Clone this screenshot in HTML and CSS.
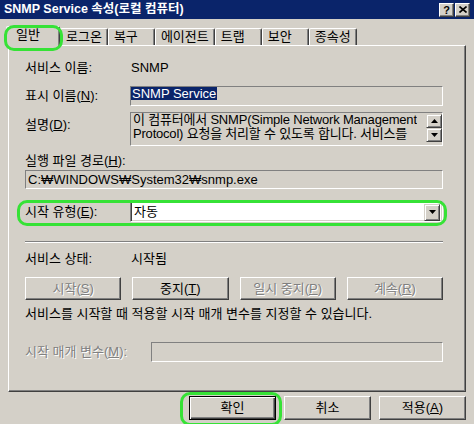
FILE: index.html
```html
<!DOCTYPE html>
<html lang="ko">
<head>
  <meta charset="UTF-8">
  <title>SNMP Service 속성(로컬 컴퓨터)</title>
  <link rel="stylesheet" href="styles.css">
</head>
<body>
  <div class="dialog">
    <!-- 제목 표시줄 -->
    <div class="titlebar">
      <span class="title">SNMP Service 속성(로컬 컴퓨터)</span>
      <div class="caption-btns">
        <span class="cap-btn help">?</span>
        <span class="cap-btn">
          <svg width="8" height="7" viewBox="0 0 8 7"><path d="M0.5 0.5 L7.5 6.5 M7.5 0.5 L0.5 6.5" stroke="#000" stroke-width="1.6"/></svg>
        </span>
      </div>
    </div>

    <!-- 탭 -->
    <div class="tabs">
      <span class="tab active marked">일반</span>
      <span class="tab">로그온</span>
      <span class="tab">복구</span>
      <span class="tab">에이전트</span>
      <span class="tab">트랩</span>
      <span class="tab">보안</span>
      <span class="tab">종속성</span>
    </div>

    <div class="panel">
      <div class="row row-name">
        <span class="label">서비스 이름:</span>
        <span class="value">SNMP</span>
      </div>

      <div class="row row-display">
        <span class="label">표시 이름(<u>N</u>):</span>
        <div class="field"><span class="selected">SNMP Service</span></div>
      </div>

      <div class="row row-desc">
        <span class="label">설명(<u>D</u>):</span>
        <div class="field desc">
          <div class="desc-text">이 컴퓨터에서 SNMP(Simple Network Management<br>Protocol) 요청을 처리할 수 있도록 합니다. 서비스를</div>
          <div class="scroll">
            <span class="scroll-btn"><svg width="7" height="4" viewBox="0 0 7 4"><polygon points="3.5,0 7,4 0,4" fill="#000"/></svg></span>
            <span class="scroll-btn"><svg width="7" height="4" viewBox="0 0 7 4"><polygon points="0,0 7,0 3.5,4" fill="#000"/></svg></span>
          </div>
        </div>
      </div>

      <div class="caption">실행 파일 경로(<u>H</u>):</div>
      <div class="field path">C:₩WINDOWS₩System32₩snmp.exe</div>

      <div class="row row-type marked">
        <span class="label">시작 유형(<u>E</u>):</span>
        <div class="combo">
          <span class="combo-text">자동</span>
          <span class="combo-btn"><svg width="7" height="4" viewBox="0 0 7 4"><polygon points="0,0 7,0 3.5,4" fill="#000"/></svg></span>
        </div>
      </div>

      <div class="sep"></div>

      <div class="row row-status">
        <span class="label">서비스 상태:</span>
        <span class="value">시작됨</span>
      </div>

      <div class="btn-row">
        <button class="btn disabled">시작(<u>S</u>)</button>
        <button class="btn">중지(<u>T</u>)</button>
        <button class="btn disabled">일시 중지(<u>P</u>)</button>
        <button class="btn disabled">계속(<u>R</u>)</button>
      </div>

      <div class="hint">서비스를 시작할 때 적용할 시작 매개 변수를 지정할 수 있습니다.</div>

      <div class="row row-params">
        <span class="label disabled">시작 매개 변수(<u>M</u>):</span>
        <div class="field"></div>
      </div>
    </div>

    <div class="footer">
      <button class="btn default marked">확인</button>
      <button class="btn">취소</button>
      <button class="btn">적용(<u>A</u>)</button>
    </div>
  </div>
</body>
</html>
```

FILE: styles.css
```css
/* Reset & Base */
* {
  margin: 0;
  padding: 0;
  box-sizing: border-box;
}
body {
  width: 474px;
  height: 424px;
  overflow: hidden;
  background: #d4d0c8;
  color: #000;
  font-family: "Liberation Sans", "Noto Sans CJK KR", sans-serif;
  font-size: 13px;
  line-height: 14px;
}
u {
  text-decoration: underline;
}
.dialog {
  width: 474px;
  height: 424px;
}

/* 제목 표시줄 */
.titlebar {
  height: 19px;
  background: #0a246a;
  display: flex;
  align-items: center;
  justify-content: space-between;
  padding: 0 4px 0 4px;
}
.title {
  color: #fff;
  font-weight: bold;
  font-size: 12.5px;
  line-height: 19px;
}
.caption-btns {
  display: flex;
  gap: 1px;
}
.cap-btn {
  width: 15px;
  height: 14px;
  display: flex;
  align-items: center;
  justify-content: center;
  background: #d4d0c8;
  border: 1px solid;
  border-color: #fff #404040 #404040 #fff;
  box-shadow: inset -1px -1px #808080;
}
.cap-btn.help {
  font-weight: bold;
  font-size: 11px;
  line-height: 12px;
}

/* 탭 */
.tabs {
  display: flex;
  align-items: flex-end;
  height: 19px;
  margin-top: 7px;
  padding-left: 6px;
}
.tab {
  height: 17px;
  min-width: 47px;
  padding: 0 5px;
  line-height: 16px;
  border: 1px solid;
  border-bottom: none;
  border-color: #fff #404040 transparent #fff;
  box-shadow: inset -1px 0 #808080;
  border-radius: 2px 2px 0 0;
}
.tab.active {
  height: 20px;
  min-width: 54px;
  padding-left: 9px;
  margin-bottom: -1px;
  position: relative;
  z-index: 1;
  background: #d4d0c8;
}

/* 초록색 강조 표시 */
.marked {
  position: relative;
}
.marked::after {
  content: "";
  position: absolute;
  border: 3px solid #36e236;
  border-radius: 10px;
  pointer-events: none;
}
.tab.marked::after {
  top: -2px;
  left: -3px;
  right: -4px;
  bottom: -5px;
}
.row-type.marked::after {
  top: -1px;
  left: -8px;
  right: -4px;
  bottom: -4px;
}
.btn.marked::after {
  top: -5px;
  left: -10px;
  right: -7px;
  bottom: -7px;
}

/* 패널 */
.panel {
  margin-left: 8px;
  width: 458px;
  height: 347px;
  border: 1px solid;
  border-color: #fff #404040 #404040 #fff;
  box-shadow: inset -1px -1px #808080;
  padding: 15px 22px 0 16px;
}
.row {
  display: flex;
  align-items: center;
}
.label {
  width: 105px;
  flex: none;
}
.value {
  padding-left: 1px;
}
.disabled {
  color: #808080;
  text-shadow: 1px 1px #fff;
}
.field {
  flex: 1;
  height: 20px;
  border: 1px solid;
  border-color: #808080 #fff #fff #808080;
}
.row-name {
  height: 14px;
}
.row-display {
  margin-top: 11px;
  height: 20px;
}
.selected {
  display: inline-block;
  background: #0a246a;
  color: #fff;
  line-height: 13px;
  padding: 0 1px;
}
.row-desc {
  margin-top: 6px;
  height: 34px;
  align-items: flex-start;
}
.row-desc .label {
  padding-top: 6px;
}
.field.desc {
  height: 34px;
  display: flex;
  justify-content: space-between;
}
.desc-text {
  padding: 0 0 0 2px;
  line-height: 14px;
  letter-spacing: -0.2px;
  white-space: nowrap;
  overflow: hidden;
}
.scroll {
  display: flex;
  flex-direction: column;
  padding-top: 1px;
}
.scroll-btn {
  width: 16px;
  height: 14px;
  display: flex;
  align-items: center;
  justify-content: center;
  background: #d4d0c8;
  border: 1px solid;
  border-color: #d4d0c8 #404040 #404040 #d4d0c8;
  box-shadow: inset 1px 1px #fff, inset -1px -1px #808080;
}
.caption {
  margin-top: 8px;
  line-height: 14px;
}
.field.path {
  margin-top: 2px;
  height: 19px;
  line-height: 17px;
  padding-left: 2px;
}
.row-type {
  margin-top: 12px;
  height: 21px;
}
.combo {
  flex: 1;
  height: 21px;
  display: flex;
  align-items: center;
  justify-content: space-between;
  background: #fff;
  border: 1px solid;
  border-color: #808080 #fff #fff #808080;
  box-shadow: inset 1px 1px #404040, inset -1px -1px #d4d0c8;
  padding: 2px 2px 1px 3px;
}
.combo-btn {
  width: 16px;
  height: 17px;
  display: flex;
  align-items: center;
  justify-content: center;
  background: #d4d0c8;
  border: 1px solid;
  border-color: #d4d0c8 #404040 #404040 #d4d0c8;
  box-shadow: inset 1px 1px #fff, inset -1px -1px #808080;
}
.sep {
  margin-top: 19px;
  height: 2px;
  border-top: 1px solid #808080;
  border-bottom: 1px solid #fff;
}
.row-status {
  margin-top: 9px;
  height: 14px;
}

/* 버튼 */
.btn-row {
  display: flex;
  gap: 11px;
  margin-top: 11px;
}
.btn {
  height: 23px;
  flex: 1;
  font: inherit;
  color: #000;
  background: #d4d0c8;
  border: 1px solid;
  border-color: #fff #404040 #404040 #fff;
  box-shadow: inset -1px -1px #808080;
}
.btn.disabled {
  color: #808080;
  text-shadow: 1px 1px #fff;
}
.hint {
  margin-top: 7px;
  line-height: 14px;
}
.row-params {
  margin-top: 21px;
  height: 20px;
}
.row-params .label {
  width: 126px;
}
.footer {
  display: flex;
  justify-content: flex-end;
  gap: 8px;
  margin-top: 4px;
  padding-right: 8px;
}
.footer .btn {
  flex: none;
  width: 87px;
  height: 24px;
}
.btn.default {
  border-color: #000;
  box-shadow: inset 1px 1px #fff, inset -1px -1px #404040, inset -2px -2px #808080;
}
```
